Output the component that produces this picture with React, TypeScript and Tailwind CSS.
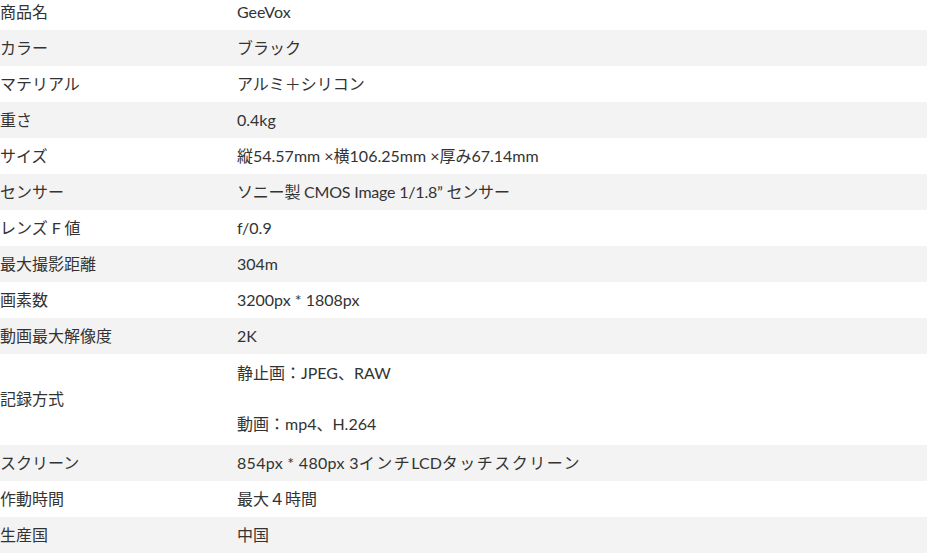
import React from "react";

const rows: { k: string; v: React.ReactNode; tall?: boolean; vc?: string }[] = [
  { k: "商品名", v: "GeeVox" },
  { k: "カラー", v: "ブラック" },
  { k: "マテリアル", v: "アルミ＋シリコン" },
  { k: "重さ", v: "0.4kg" },
  { k: "サイズ", v: "縦54.57mm ×横106.25mm ×厚み67.14mm" },
  { k: "センサー", v: "ソニー製 CMOS Image 1/1.8” センサー", vc: "tracking-[-0.2px]" },
  { k: "レンズ F 値", v: "f/0.9" },
  { k: "最大撮影距離", v: "304m" },
  { k: "画素数", v: "3200px * 1808px" },
  { k: "動画最大解像度", v: "2K" },
  {
    k: "記録方式",
    v: (
      <>
        静止画：JPEG、RAW
        <br />
        <br />
        動画：mp4、H.264
      </>
    ),
    tall: true,
  },
  {
    k: "スクリーン",
    v: (
      <>
        <span className="tracking-[0.3px]">854px * 480px 3</span>
        <span className="tracking-[1.5px]">インチ</span>LCD
        <span className="tracking-[1.5px]">タッチスクリーン</span>
      </>
    ),
  },
  { k: "作動時間", v: "最大４時間" },
  { k: "生産国", v: "中国" },
];

export default function App() {
  return (
    <div
      className="w-[927px] h-[555px] overflow-hidden bg-white text-[16px] text-[#333333]"
      style={{ fontFamily: 'Lato, "Noto Sans CJK JP", sans-serif' }}
    >
      <div className="-mt-[6px] flex flex-col">
        {rows.map((r, i) => (
          <div
            key={i}
            className={`grid grid-cols-[237px_1fr] items-center ${
              i % 2 === 1 ? "bg-[#f3f3f3]" : "bg-white"
            } ${r.tall ? "pt-[6px] pb-[8px] leading-[25.5px]" : "py-[5px] leading-[26px]"}`}
          >
            <div className="pl-0">{r.k}</div>
            <div className={r.vc ?? ""}>{r.v}</div>
          </div>
        ))}
      </div>
    </div>
  );
}
